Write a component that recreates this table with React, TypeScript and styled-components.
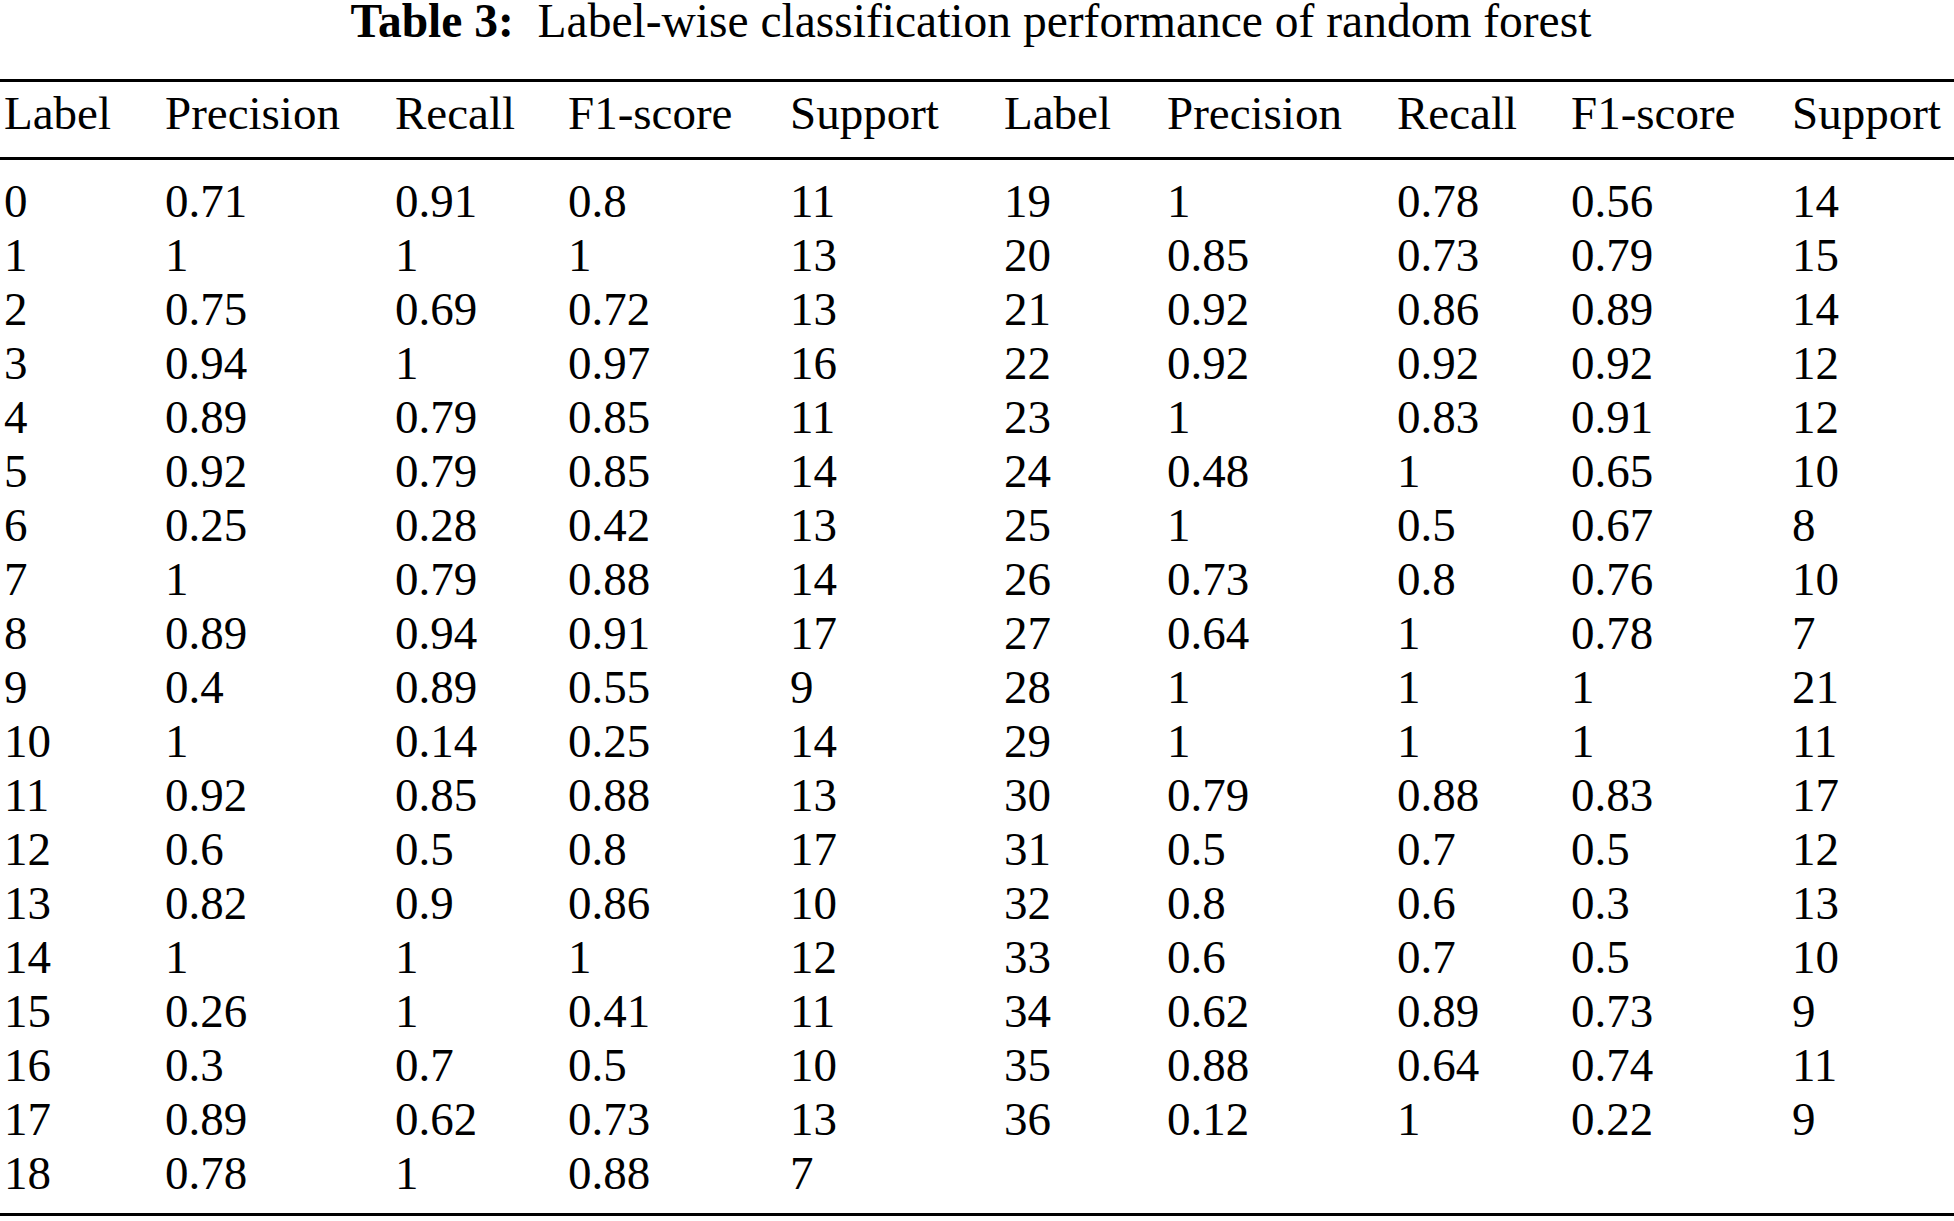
import React from "react";
import styled, { createGlobalStyle } from "styled-components";

const Global = createGlobalStyle`
  html, body { margin: 0; padding: 0; background: #ffffff; }
  body { font-family: "Liberation Serif", serif; color: #000; }
`;

const Page = styled.div`
  width: 1954px;
  height: 1221px;
  overflow: hidden;
  background: #fff;
  font-family: "Liberation Serif", serif;
  color: #000;
`;

const Caption = styled.div`
  height: 42px;
  line-height: 40px;
  padding-top: 1px;
  padding-right: 12px;
  font-family: "Liberation Serif", serif;
  font-size: 47.5px;
  text-align: center;
  white-space: pre;
`;

const CaptionLabel = styled.span`
  font-weight: bold;
`;

const Table = styled.div`
  margin-top: 36px;
  border-top: 3px solid #000;
  border-bottom: 3px solid #000;
`;

const Head = styled.div`
  padding: 4px 0 17px;
  border-bottom: 3px solid #000;
`;

const Body = styled.div`
  padding: 14px 0 13px;
`;

const Row = styled.div`
  display: grid;
  grid-template-columns: 161px 230px 173px 222px 214px 163px 230px 174px 221px 1fr;
  padding-left: 4px;
  height: 54px;
  line-height: 54px;
  font-size: 47px;
  white-space: nowrap;
`;

const Cell = styled.div`
  font-family: "Liberation Serif", serif;
`;

type Rec = [string, string, string, string, string];

const left: Rec[] = [
  ["0", "0.71", "0.91", "0.8", "11"],
  ["1", "1", "1", "1", "13"],
  ["2", "0.75", "0.69", "0.72", "13"],
  ["3", "0.94", "1", "0.97", "16"],
  ["4", "0.89", "0.79", "0.85", "11"],
  ["5", "0.92", "0.79", "0.85", "14"],
  ["6", "0.25", "0.28", "0.42", "13"],
  ["7", "1", "0.79", "0.88", "14"],
  ["8", "0.89", "0.94", "0.91", "17"],
  ["9", "0.4", "0.89", "0.55", "9"],
  ["10", "1", "0.14", "0.25", "14"],
  ["11", "0.92", "0.85", "0.88", "13"],
  ["12", "0.6", "0.5", "0.8", "17"],
  ["13", "0.82", "0.9", "0.86", "10"],
  ["14", "1", "1", "1", "12"],
  ["15", "0.26", "1", "0.41", "11"],
  ["16", "0.3", "0.7", "0.5", "10"],
  ["17", "0.89", "0.62", "0.73", "13"],
  ["18", "0.78", "1", "0.88", "7"],
];

const right: Rec[] = [
  ["19", "1", "0.78", "0.56", "14"],
  ["20", "0.85", "0.73", "0.79", "15"],
  ["21", "0.92", "0.86", "0.89", "14"],
  ["22", "0.92", "0.92", "0.92", "12"],
  ["23", "1", "0.83", "0.91", "12"],
  ["24", "0.48", "1", "0.65", "10"],
  ["25", "1", "0.5", "0.67", "8"],
  ["26", "0.73", "0.8", "0.76", "10"],
  ["27", "0.64", "1", "0.78", "7"],
  ["28", "1", "1", "1", "21"],
  ["29", "1", "1", "1", "11"],
  ["30", "0.79", "0.88", "0.83", "17"],
  ["31", "0.5", "0.7", "0.5", "12"],
  ["32", "0.8", "0.6", "0.3", "13"],
  ["33", "0.6", "0.7", "0.5", "10"],
  ["34", "0.62", "0.89", "0.73", "9"],
  ["35", "0.88", "0.64", "0.74", "11"],
  ["36", "0.12", "1", "0.22", "9"],
];

const headers = ["Label", "Precision", "Recall", "F1-score", "Support"];

export default function App() {
  const empty: Rec = ["", "", "", "", ""];
  return (
    <Page>
      <Global />
      <Caption>
        <CaptionLabel>Table 3:</CaptionLabel>
        {"  Label-wise classification performance of random forest"}
      </Caption>
      <Table>
        <Head>
          <Row>
            {[...headers, ...headers].map((h, i) => (
              <Cell key={i}>{h}</Cell>
            ))}
          </Row>
        </Head>
        <Body>
          {left.map((l, i) => {
            const r = right[i] ?? empty;
            return (
              <Row key={i}>
                {[...l, ...r].map((v, j) => (
                  <Cell key={j}>{v}</Cell>
                ))}
              </Row>
            );
          })}
        </Body>
      </Table>
    </Page>
  );
}
